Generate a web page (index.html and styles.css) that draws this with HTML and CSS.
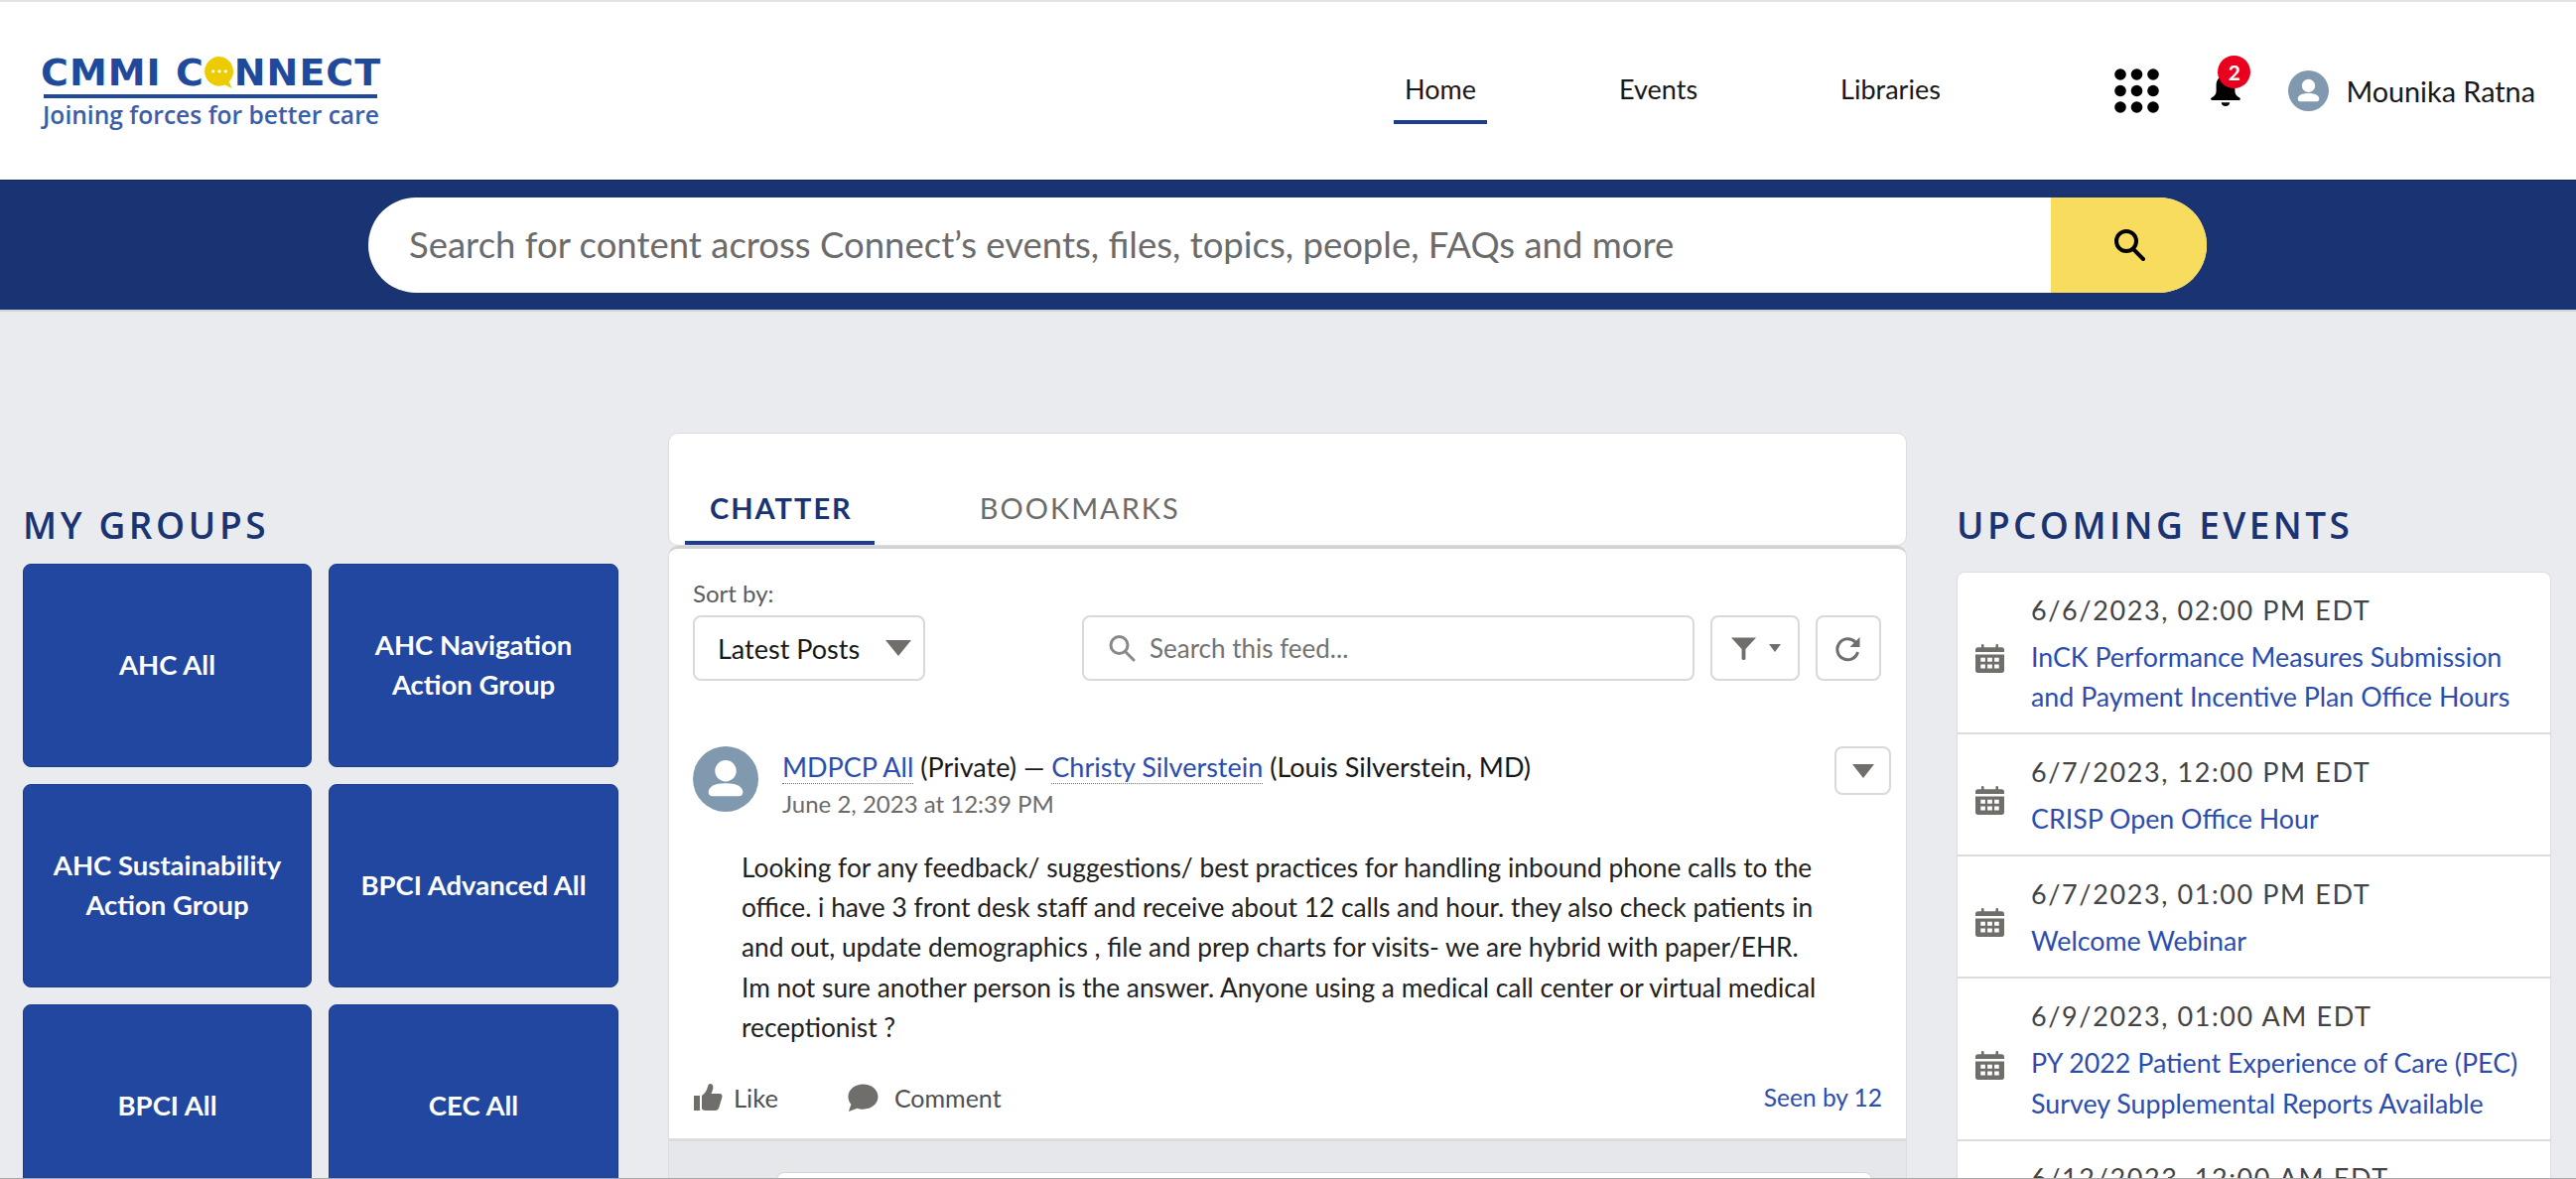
FILE: index.html
```html
<!DOCTYPE html>
<html lang="en">
<head>
  <meta charset="UTF-8" />
  <meta name="viewport" content="width=device-width, initial-scale=1.0" />
  <title>CMMI Connect</title>
  <link rel="stylesheet" href="styles.css">
</head>
<body>
  <svg class="icon-defs" width="0" height="0">
    <symbol id="cal" viewBox="0 0 22 22">
      <path d="M0 8h22v12a2 2 0 0 1-2 2H2a2 2 0 0 1-2-2zM0 6V4.500a2 2 0 0 1 2-2h2.500V1a1 1 0 0 1 2 0v1.500h9V1a1 1 0 0 1 2 0v1.500H20a2 2 0 0 1 2 2V6z" fill="#706e6b"/>
      <path d="M4 10.500h3.500v3H4zM9.200 10.500h3.600v3H9.200zM14.500 10.500H18v3h-3.500zM4 15.500h3.500v3H4zM9.200 15.500h3.600v3H9.200zM14.500 15.500H18v3h-3.500z" fill="#fff"/>
    </symbol>
    <symbol id="user" viewBox="0 0 40 40">
      <circle cx="20" cy="20" r="20" fill="#8199af"/>
      <circle cx="20" cy="15" r="6.500" fill="#fff"/>
      <path d="M9.500 28c0-3.500 4-5.500 10.500-5.500S30.500 24.500 30.500 28c0 1.500-1 2.500-2.500 2.500H12c-1.500 0-2.500-1-2.500-2.500z" fill="#fff"/>
    </symbol>
  </svg>

  <header class="topbar">
    <div class="logo">
      <div class="logo-name">CMMI C<span class="logo-o"><svg width="30" height="32" viewBox="0 0 26 28"><path d="M13 0a13 13 0 1 0 5 25l6 3-2.500-6A13 13 0 0 0 13 0z" fill="#eccb00"/><circle cx="7.500" cy="13" r="1.500" fill="#fff"/><circle cx="13" cy="13" r="1.500" fill="#fff"/><circle cx="18.500" cy="13" r="1.500" fill="#fff"/></svg></span>NNECT</div>
      <div class="logo-rule"></div>
      <div class="logo-tag">Joining forces for better care</div>
    </div>
    <nav class="mainnav">
      <a class="active" href="#">Home</a>
      <a href="#">Events</a>
      <a href="#">Libraries</a>
    </nav>
    <div class="tools">
      <svg class="waffle" width="45" height="45" viewBox="0 0 45 45" fill="#000">
        <circle cx="6" cy="6" r="5.800"/><circle cx="22.500" cy="6" r="5.800"/><circle cx="39" cy="6" r="5.800"/>
        <circle cx="6" cy="22.500" r="5.800"/><circle cx="22.500" cy="22.500" r="5.800"/><circle cx="39" cy="22.500" r="5.800"/>
        <circle cx="6" cy="39" r="5.800"/><circle cx="22.500" cy="39" r="5.800"/><circle cx="39" cy="39" r="5.800"/>
      </svg>
      <div class="bell">
        <svg width="34" height="32" viewBox="0 0 36 34" fill="#000">
          <path d="M18 0c-6.500 0-10 5-10 11v6c0 3-2 5-5 7-1.500 1-1 2.500.5 2.500h29c1.500 0 2-1.500.5-2.500-3-2-5-4-5-7v-6C28 5 24.500 0 18 0z"/>
          <path d="M13.500 29h9c0 2.500-2 4-4.500 4s-4.500-1.500-4.500-4z"/>
        </svg>
        <span class="badge">2</span>
      </div>
      <div class="me">
        <svg width="41" height="41"><use href="#user"/></svg>
        <span>Mounika Ratna</span>
      </div>
    </div>
  </header>

  <div class="searchband">
    <form class="sitesearch">
      <div class="sitesearch-text">Search for content across Connect’s events, files, topics, people, FAQs and more</div>
      <div class="sitesearch-btn">
        <svg width="36" height="36" viewBox="0 0 36 36" fill="none" stroke="#000" stroke-width="4">
          <circle cx="15" cy="14" r="10"/><path d="M22 22l10 10" stroke-linecap="round"/>
        </svg>
      </div>
    </form>
  </div>

  <main class="page">
    <!-- grupos -->
    <section class="col-groups">
      <h2 class="col-title">MY GROUPS</h2>
      <div class="group-grid">
        <a class="group" href="#">AHC All</a>
        <a class="group" href="#">AHC Navigation Action Group</a>
        <a class="group" href="#">AHC Sustainability Action Group</a>
        <a class="group" href="#">BPCI Advanced All</a>
        <a class="group" href="#">BPCI All</a>
        <a class="group" href="#">CEC All</a>
      </div>
    </section>

    <!-- feed -->
    <section class="col-feed">
      <div class="tabs">
        <a class="tab active" href="#">CHATTER</a>
        <a class="tab" href="#">BOOKMARKS</a>
      </div>
      <div class="feed-card">
        <div class="sort-label">Sort by:</div>
        <div class="feed-controls">
          <div class="ctl sort">
            <span>Latest Posts</span>
            <svg width="26" height="16" viewBox="0 0 26 16"><path d="M0 0h26L13 16z" fill="#706e6b"/></svg>
          </div>
          <div class="ctl feedsearch">
            <svg width="28" height="28" viewBox="0 0 28 28" fill="none" stroke="#8a8886" stroke-width="3">
              <circle cx="11.500" cy="11" r="8.500"/><path d="M18 18l8 8" stroke-linecap="round"/>
            </svg>
            <span>Search this feed...</span>
          </div>
          <div class="ctl filter">
            <svg width="27" height="24" viewBox="0 0 28 24"><path d="M1 1h26L16 13v9.500a2 2 0 0 1-4 0V13z" fill="#706e6b"/></svg>
            <svg width="12" height="8" viewBox="0 0 12 8"><path d="M0 0h12L6 8z" fill="#706e6b"/></svg>
          </div>
          <div class="ctl refresh">
            <svg width="28" height="28" viewBox="0 0 28 28" fill="none" stroke="#706e6b" stroke-width="3">
              <path d="M23.500 18A10.500 10.500 0 1 1 21 8l3 3"/>
              <path d="M25.500 3v10h-10z" fill="#706e6b" stroke="none"/>
            </svg>
          </div>
        </div>

        <article class="post">
          <div class="post-head">
            <svg width="66" height="66"><use href="#user"/></svg>
            <div class="post-meta">
              <div class="post-title"><a href="#">MDPCP All</a> (Private) — <a href="#">Christy Silverstein</a> (Louis Silverstein, MD)</div>
              <div class="post-date">June 2, 2023 at 12:39 PM</div>
            </div>
            <div class="post-menu">
              <svg width="22" height="14" viewBox="0 0 22 14"><path d="M0 0h22L11 14z" fill="#706e6b"/></svg>
            </div>
          </div>
          <p class="post-body">Looking for any feedback/ suggestions/ best practices for handling inbound phone calls to the<br>office. i have 3 front desk staff and receive about 12 calls and hour. they also check patients in<br>and out, update demographics , file and prep charts for visits- we are hybrid with paper/EHR.<br>Im not sure another person is the answer. Anyone using a medical call center or virtual medical<br>receptionist ?</p>
          <div class="post-actions">
            <span class="act act-like">
              <svg width="30" height="30" viewBox="0 0 30 30" fill="#706e6b"><path d="M1 13h6v15H1zM9 13c3-2 5-5 6-9 .4-2 1-3 2.500-3 2.500 0 3.500 3 2.500 6l-1.500 4H27c2 0 3 2 2.300 4l-3 10c-.5 2-2 3-4 3H13c-2 0-4-1-4-2z"/></svg>
              Like
            </span>
            <span class="act act-comment">
              <svg width="33" height="30" viewBox="0 0 34 30" fill="#706e6b"><path d="M18 1c8.500 0 15.500 5.500 15.500 13S26.500 27 18 27c-2.200 0-4.300-.3-6-1l-9 3.500 2.500-7.500C3.500 19.500 2.500 17 2.500 14 2.500 6.500 9.500 1 18 1z"/></svg>
              Comment
            </span>
            <a class="seen" href="#">Seen by 12</a>
          </div>
        </article>
      </div>
      <div class="feed-rest">
        <div class="next-card"></div>
      </div>
    </section>

    <!-- eventos -->
    <section class="col-events">
      <h2 class="col-title">UPCOMING EVENTS</h2>
      <div class="event-list">
        <div class="event">
          <svg width="29" height="29"><use href="#cal"/></svg>
          <div>
            <div class="event-date">6/6/2023, 02:00 PM EDT</div>
            <a class="event-name" href="#">InCK Performance Measures Submission<br>and Payment Incentive Plan Office Hours</a>
          </div>
        </div>
        <div class="event">
          <svg width="29" height="29"><use href="#cal"/></svg>
          <div>
            <div class="event-date">6/7/2023, 12:00 PM EDT</div>
            <a class="event-name" href="#">CRISP Open Office Hour</a>
          </div>
        </div>
        <div class="event">
          <svg width="29" height="29"><use href="#cal"/></svg>
          <div>
            <div class="event-date">6/7/2023, 01:00 PM EDT</div>
            <a class="event-name" href="#">Welcome Webinar</a>
          </div>
        </div>
        <div class="event">
          <svg width="29" height="29"><use href="#cal"/></svg>
          <div>
            <div class="event-date">6/9/2023, 01:00 AM EDT</div>
            <a class="event-name" href="#">PY 2022 Patient Experience of Care (PEC)<br>Survey Supplemental Reports Available</a>
          </div>
        </div>
        <div class="event event-last">
          <svg width="29" height="29"><use href="#cal"/></svg>
          <div>
            <div class="event-date">6/12/2023, 12:00 AM EDT</div>
          </div>
        </div>
      </div>
    </section>
  </main>
  <div class="bottom-edge"></div>
</body>
</html>
```

FILE: styles.css
```css
html, body { height: 100%; }
body { margin: 0; height: 1188px; overflow: hidden; background: #e9ebef; font-family: Lato, "Open Sans", sans-serif; color: #181818; }
a { color: inherit; text-decoration: none; }
.icon-defs { position: absolute; }
.bottom-edge { position: fixed; left: 0; right: 0; bottom: 0; height: 1px; background: #a8a8a8; }

/* cabecera */
.topbar { height: 179px; border-top: 2px solid #e3e3e3; background: white; display: flex; align-items: center; padding-right: 41px; }
.logo { margin-left: 41px; width: 343px; color: #1f4a9c; }
.logo-name { font-family: "DejaVu Sans", sans-serif; font-weight: 700; font-size: 38px; line-height: 38px; letter-spacing: 1px; white-space: nowrap; padding-top: 2px; }
.logo-o { display: inline-block; width: 30px; height: 32px; vertical-align: -3px; }
.logo-rule { height: 4px; margin: 3px 4px 0 3px; background: #1f4a9c; }
.logo-tag { font-family: "Open Sans", sans-serif; font-weight: 600; font-size: 24.6px; line-height: 30px; margin: 2px 0 0 2px; white-space: nowrap; color: #3a5ea8; }
.mainnav { margin-left: auto; display: flex; align-items: center; font-size: 27px; margin-right: 164.5px; }
.mainnav a { display: block; padding: 25px 11px 0; height: 78px; line-height: 36px; margin-left: 122px; margin-top: -12px; box-sizing: border-box; }
.mainnav a:first-child { margin-left: 0; }
.mainnav a.active { border-bottom: 4px solid #1b3e93; }
.tools { display: flex; align-items: center; }
.bell { position: relative; width: 34px; height: 32px; margin-left: 50px; }
.badge { position: absolute; top: -20px; left: 9px; width: 33px; height: 33px; border-radius: 50%; background: #ea001e; color: white; font-size: 21px; font-weight: 700; line-height: 33px; text-align: center; }
.me { display: flex; align-items: center; gap: 17px; margin-left: 46px; font-size: 28.8px; }

/* buscador */
.searchband { height: 133px; background: #193373; border-top: 1px solid #122558; border-bottom: 2px solid #cfd3dc; box-sizing: border-box; padding-top: 17px; }
.sitesearch { margin-left: 371px; width: 1852px; height: 96px; display: flex; border-radius: 48px; overflow: hidden; background: white; }
.sitesearch-text { flex: 1; padding-left: 41px; line-height: 94px; font-size: 36.5px; color: #6b6b6b; white-space: nowrap; }
.sitesearch-btn { width: 157px; background: #f8dc5d; display: flex; align-items: center; justify-content: center; }

/* columnas */
.page { display: grid; grid-template-columns: 600px 1248px 599px; column-gap: 50px; padding: 122px 0 0 23px; align-items: start; }
.col-title { margin: 0; font-family: "Open Sans", sans-serif; font-weight: 600; font-size: 37px; line-height: 50px; letter-spacing: 3.4px; color: #193373; }
.col-groups { padding-top: 68px; }
.col-groups .col-title { height: 63.5px; letter-spacing: 3.6px; }
.group-grid { display: grid; grid-template-columns: 291px 292px; column-gap: 17px; grid-auto-rows: 205.5px; row-gap: 16.5px; }
.group { display: flex; align-items: center; justify-content: center; text-align: center; padding: 0 22px; background: #2247a0; border: 1px solid #1d3d8c; border-radius: 8px; color: white; font-size: 27.5px; font-weight: 700; line-height: 40px; }

/* feed */
.tabs { height: 114px; background: white; border: 1px solid #dcdcdc; border-radius: 10px; display: flex; align-items: flex-end; padding-left: 16px; box-sizing: border-box; }
.tab { display: block; height: 50px; padding: 0 25px; font-size: 29px; letter-spacing: 2px; line-height: 26px; color: #6b6b6b; box-sizing: border-box; }
.tab.active { color: #193373; font-weight: 700; border-bottom: 4px solid #1b3e93; padding-right: 22px; margin-right: 81px; }
.feed-card { background: white; border-top: 3px solid #d2d2d2; border-left: 1px solid #dcdcdc; border-right: 1px solid #dcdcdc; padding: 27px 24px 0 24px; height: 600px; box-sizing: border-box; border-bottom: 3px solid #dcdddf; border-radius: 10px 10px 0 0; }
.sort-label { font-size: 24px; line-height: 36px; color: #5c5c5c; }
.feed-controls { display: flex; margin-top: 4px; height: 66px; }
.ctl { display: flex; align-items: center; border: 2px solid #d9d9d9; border-radius: 8px; box-sizing: border-box; }
.sort { width: 234px; padding-left: 23px; font-size: 27px; justify-content: space-between; padding-right: 12px; }
.feedsearch { width: 617px; margin-left: 158px; padding-left: 24px; gap: 14px; font-size: 26px; color: #737373; }
.filter { width: 90px; margin-left: 16px; padding-left: 18px; gap: 12px; }
.refresh { width: 66px; margin-left: 16px; justify-content: center; }

.post { margin-top: 66px; }
.post-head { display: flex; }
.post-meta { margin-left: 24px; flex: 1; }
.post-title { font-size: 27px; line-height: 37px; margin-top: 2px; }
.post-title a { color: #2b4dae; border-bottom: 1px dotted #777; }
.post-date { font-size: 24px; line-height: 37px; color: #6b6b6b; }
.post-menu { width: 57px; height: 49px; margin-right: -9px; display: flex; align-items: center; justify-content: center; border: 2px solid #d9d9d9; border-radius: 8px; box-sizing: border-box; }
.post-body { margin: 26px 0 0 49px; font-size: 26.3px; line-height: 40.2px; color: #222; white-space: nowrap; }
.post-actions { display: flex; align-items: center; margin-top: 36px; font-size: 25.5px; color: #505050; }
.act { display: flex; align-items: center; }
.act-like { gap: 11px; }
.act-comment { gap: 16px; margin-left: 68px; font-size: 25px; }
.seen { margin-left: auto; margin-top: -2px; font-size: 24.5px; color: #2b4dae; }
.feed-rest { height: 60px; background: #e6e7ea; border-left: 1px solid #dcdcdc; border-right: 1px solid #dcdcdc; padding-top: 31px; }
.next-card { margin-left: 108px; width: 1102px; height: 30px; background: white; border: 1px solid #d4d6da; border-radius: 8px; }

/* eventos */
.col-events { padding-top: 68px; }
.col-events .col-title { height: 71.5px; }
.event-list { background: white; border: 1px solid #dcdcdc; border-radius: 8px 8px 0 0; }
.event { display: flex; align-items: center; gap: 27px; padding: 18px 18px 15.5px 18px; border-bottom: 2px solid #dcdcdc; }
.event > svg { flex: none; margin-top: 10px; }
.event-date { font-size: 27px; line-height: 40px; letter-spacing: 1.6px; color: #444; white-space: nowrap; }
.event-name { display: block; font-size: 26.8px; line-height: 40.5px; color: #2b4dae; margin-top: 7px; white-space: nowrap; }
.event-last { min-height: 123px; box-sizing: border-box; padding-top: 17px; }
.event-last > div { align-self: flex-start; }
```
